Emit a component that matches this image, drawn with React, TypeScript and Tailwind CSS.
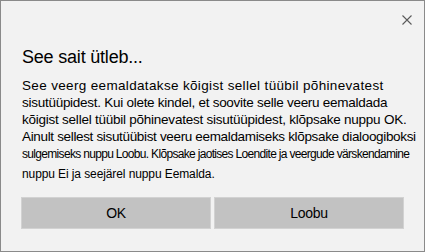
export default function App() {
  const font = { fontFamily: '"Liberation Sans", Arial, sans-serif' };
  return (
    <div
      className="w-[425px] h-[252px] border border-[#8a8a8a] bg-[#f2f2f2] flex flex-col text-black overflow-hidden"
      style={font}
    >
      <div className="flex justify-end pt-[14px] pr-[12px] h-[43px]">
        <svg width="10" height="10" viewBox="0 0 10 10" className="text-[#5a5a5a]">
          <path d="M0.5 0.5 L9.5 9.5 M9.5 0.5 L0.5 9.5" stroke="currentColor" strokeWidth="1.1" />
        </svg>
      </div>
      <div className="px-[21px]">
        <h1 className="text-[18px] leading-[26px] tracking-[-0.2px]">See sait ütleb...</h1>
        <div className="mt-[7px] text-[13.5px] leading-[17px] whitespace-nowrap">
          <div className="tracking-[0.34px]">See veerg eemaldatakse kõigist sellel tüübil põhinevatest</div>
          <div className="tracking-[-0.27px]">sisutüüpidest. Kui olete kindel, et soovite selle veeru eemaldada</div>
          <div className="tracking-[-0.24px]">kõigist sellel tüübil põhinevatest sisutüüpidest, klõpsake nuppu OK.</div>
          <div className="tracking-[-0.34px]">Ainult sellest sisutüübist veeru eemaldamiseks klõpsake dialoogiboksi</div>
          <div className="text-[12px] leading-[18px] tracking-[-0.68px]">sulgemiseks nuppu Loobu. Klõpsake jaotises Loendite ja veergude värskendamine</div>
          <div className="text-[12px] leading-[22px] tracking-[-0.1px]">nuppu Ei ja seejärel nuppu Eemalda.</div>
        </div>
      </div>
      <div className="mt-auto mb-[22px] px-[20px] flex gap-[3px]">
        <button className="flex-1 h-[32px] bg-[#c2c2c2] border border-[#d2d2d2] text-[14px] tracking-[-0.3px]">OK</button>
        <button className="flex-1 h-[32px] bg-[#c2c2c2] border border-[#d2d2d2] text-[14px] tracking-[-0.3px]">Loobu</button>
      </div>
    </div>
  );
}
